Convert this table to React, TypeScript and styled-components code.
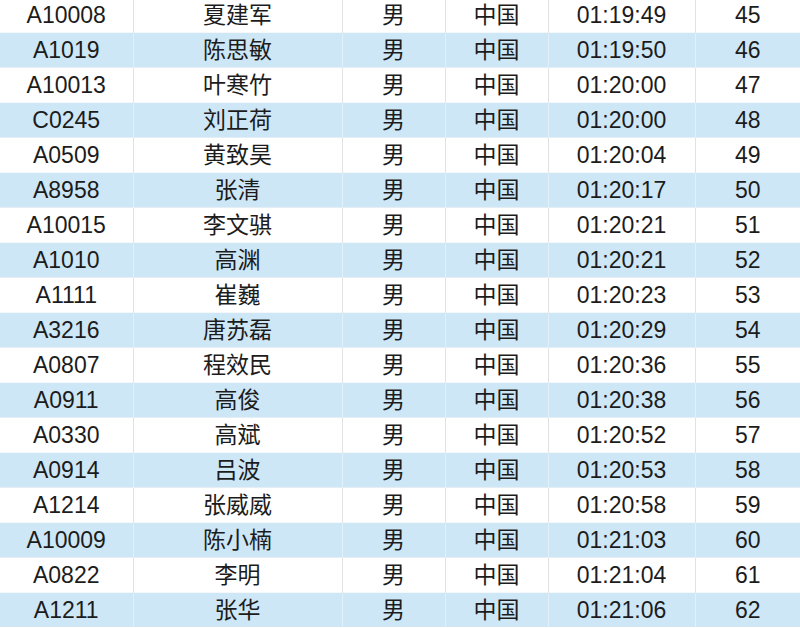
import { FC } from 'react'
import styled, { createGlobalStyle } from 'styled-components'

const GlobalStyle = createGlobalStyle`
  html, body {
    margin: 0;
    padding: 0;
    background: #ffffff;
    overflow: hidden;
  }
  body {
    font-family: "Liberation Sans", "Noto Sans CJK SC", sans-serif;
  }
`

const Wrapper = styled.div`
  width: 800px;
  height: 628px;
  overflow: hidden;
`

const Table = styled.table`
  width: 800px;
  margin-top: -3px;
  border-collapse: collapse;
  table-layout: fixed;
  color: #1c1c1c;
  font-size: 23px;
`

const Row = styled.tr<{ $shaded: boolean }>`
  height: 34px;
  background: ${p => (p.$shaded ? '#cee7f7' : '#ffffff')};
  border-top: 1px solid ${p => (p.$shaded ? '#f4f8fb' : '#e4eef4')};

  td {
    border-right: 1px solid ${p => (p.$shaded ? '#e2f0fa' : '#e2e2e2')};
  }
`

const Cell = styled.td`
  padding: 0;
  text-align: center;
  vertical-align: middle;
  line-height: 34px;
  white-space: nowrap;

  &:last-child {
    border-right: none;
  }
`

interface IRunner {
  id: string
  name: string
  time: string
  rank: number
}

const runners: IRunner[] = [
  { id: 'A10008', name: '夏建军', time: '01:19:49', rank: 45 },
  { id: 'A1019', name: '陈思敏', time: '01:19:50', rank: 46 },
  { id: 'A10013', name: '叶寒竹', time: '01:20:00', rank: 47 },
  { id: 'C0245', name: '刘正荷', time: '01:20:00', rank: 48 },
  { id: 'A0509', name: '黄致昊', time: '01:20:04', rank: 49 },
  { id: 'A8958', name: '张清', time: '01:20:17', rank: 50 },
  { id: 'A10015', name: '李文骐', time: '01:20:21', rank: 51 },
  { id: 'A1010', name: '高渊', time: '01:20:21', rank: 52 },
  { id: 'A1111', name: '崔巍', time: '01:20:23', rank: 53 },
  { id: 'A3216', name: '唐苏磊', time: '01:20:29', rank: 54 },
  { id: 'A0807', name: '程效民', time: '01:20:36', rank: 55 },
  { id: 'A0911', name: '高俊', time: '01:20:38', rank: 56 },
  { id: 'A0330', name: '高斌', time: '01:20:52', rank: 57 },
  { id: 'A0914', name: '吕波', time: '01:20:53', rank: 58 },
  { id: 'A1214', name: '张威威', time: '01:20:58', rank: 59 },
  { id: 'A10009', name: '陈小楠', time: '01:21:03', rank: 60 },
  { id: 'A0822', name: '李明', time: '01:21:04', rank: 61 },
  { id: 'A1211', name: '张华', time: '01:21:06', rank: 62 },
]

const widths = [133, 209, 103, 103, 147, 105]

const App: FC = () => {
  return (
    <Wrapper>
      <GlobalStyle />
      <Table>
        <colgroup>
          {widths.map((w, i) => (
            <col key={i} style={{ width: w }} />
          ))}
        </colgroup>
        <tbody>
          {runners.map((r, i) => (
            <Row key={r.id} $shaded={i % 2 === 1}>
              <Cell>{r.id}</Cell>
              <Cell>{r.name}</Cell>
              <Cell>男</Cell>
              <Cell>中国</Cell>
              <Cell>{r.time}</Cell>
              <Cell>{r.rank}</Cell>
            </Row>
          ))}
        </tbody>
      </Table>
    </Wrapper>
  )
}

export default App
